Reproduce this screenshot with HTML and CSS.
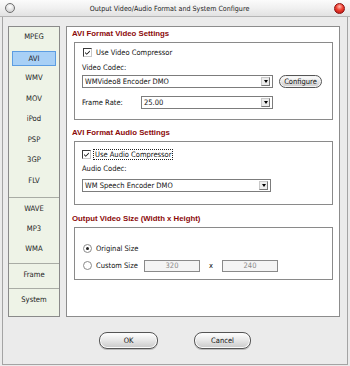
FILE: index.html
```html
<!DOCTYPE html>
<html>
<head>
<meta charset="utf-8">
<link rel="stylesheet" href="styles.css">
</head>
<body>
<div class="win">
  <div class="titlebar">
    <span class="tb-icon"></span>
    <span class="tb-title">Output Video/Audio Format and System Configure</span>
    <span class="tb-close"></span>
  </div>
  <div class="client">
    <div class="content">
      <div class="sidebar">
        <div class="sgroup g1">
          <div class="sitem">MPEG</div>
          <div class="sitem active">AVI</div>
          <div class="sitem">WMV</div>
          <div class="sitem">MOV</div>
          <div class="sitem">iPod</div>
          <div class="sitem">PSP</div>
          <div class="sitem">3GP</div>
          <div class="sitem">FLV</div>
        </div>
        <div class="sgroup g2">
          <div class="sitem">WAVE</div>
          <div class="sitem">MP3</div>
          <div class="sitem">WMA</div>
        </div>
        <div class="sgroup g3">
          <div class="sitem">Frame</div>
        </div>
        <div class="sgroup g4">
          <div class="sitem">System</div>
        </div>
      </div>
      <div class="panel">
        <div class="sec-title">AVI Format Video Settings</div>
        <div class="group g-video">
          <div class="chk-row">
            <span class="chk"><svg width="9" height="9" viewBox="0 0 9 9"><path d="M1.5 4 L3.5 6 L7.5 2 L7.5 3.5 L3.5 7.5 L1.5 5.5 Z" fill="#000"/></svg></span>
            <span class="lbl">Use Video Compressor</span>
          </div>
          <div class="field-lbl">Video Codec:</div>
          <div class="row codec-row">
            <div class="select s-vcodec"><span class="val">WMVideo8 Encoder DMO</span><span class="arrow"><i></i></span></div>
            <div class="pill cfg">Configure</div>
          </div>
          <div class="row fr-row">
            <span class="fr-lbl">Frame Rate:</span>
            <div class="select s-fr"><span class="val">25.00</span><span class="arrow"><i></i></span></div>
          </div>
        </div>
        <div class="sec-title">AVI Format Audio Settings</div>
        <div class="group g-audio">
          <div class="chk-row">
            <span class="chk"><svg width="9" height="9" viewBox="0 0 9 9"><path d="M1.5 4 L3.5 6 L7.5 2 L7.5 3.5 L3.5 7.5 L1.5 5.5 Z" fill="#000"/></svg></span>
            <span class="lbl focus">Use Audio Compressor</span>
          </div>
          <div class="field-lbl">Audio Codec:</div>
          <div class="select s-acodec"><span class="val">WM Speech Encoder DMO</span><span class="arrow"><i></i></span></div>
        </div>
        <div class="sec-title">Output Video Size (Width x Height)</div>
        <div class="group g-size">
          <div class="radio-row">
            <span class="radio on"></span><span class="lbl">Original Size</span>
          </div>
          <div class="radio-row">
            <span class="radio"></span><span class="lbl cs">Custom Size</span>
            <span class="num">320</span>
            <span class="x">x</span>
            <span class="num">240</span>
          </div>
        </div>
      </div>
    </div>
    <div class="buttons">
      <div class="pill btn ok">OK</div>
      <div class="pill btn cancel">Cancel</div>
    </div>
  </div>
</div>
</body>
</html>
```
FILE: styles.css
```css
html, body {
  margin: 0;
  padding: 0;
  background: #ffffff;
}
body {
  font-family: "DejaVu Sans Condensed", "DejaVu Sans", sans-serif;
  font-size: 7.5px;
  color: #111;
}
.win {
  width: 350px;
  height: 366px;
  background: #ebebeb;
  display: flex;
  flex-direction: column;
  box-sizing: border-box;
}
.titlebar {
  height: 17px;
  flex: none;
  box-sizing: border-box;
  background: linear-gradient(#fbfbfb, #f0f0f0 50%, #e2e2e2);
  border-bottom: 1px solid #b5b5b5;
  display: flex;
  align-items: center;
}
.tb-icon {
  width: 10px;
  height: 10px;
  margin-left: 5px;
  box-sizing: border-box;
  border-radius: 50%;
  border: 1px solid #6e6e6e;
  background: radial-gradient(circle at 50% 35%, #ffffff, #d6d6d6 70%);
  flex: none;
}
.tb-title {
  flex: 1;
  text-align: center;
  font-size: 7.1px;
  color: #222;
  margin-top: 1px;
  padding-right: 10px;
}
.tb-close {
  width: 11px;
  height: 11px;
  margin-right: 5px;
  box-sizing: border-box;
  border-radius: 50%;
  border: 1px solid #8a1010;
  background: radial-gradient(circle at 50% 30%, #ffb8b0 0, #f04030 45%, #b01010 100%);
  flex: none;
}
.client {
  flex: 1;
  margin: 0 2px 1px 2px;
  border-left: 1px solid #a4a4a4;
  border-right: 1px solid #a4a4a4;
  border-bottom: 1px solid #a4a4a4;
  padding: 9px 0 0 5px;
  display: flex;
  flex-direction: column;
}
.content {
  display: flex;
  gap: 6px;
  height: 291px;
}
.sidebar {
  width: 52px;
  box-sizing: border-box;
  border: 1px solid #8a8a8a;
  background: #eef3e7;
  display: flex;
  flex-direction: column;
}
.sgroup {
  border-bottom: 1px solid #a9aca5;
  box-sizing: border-box;
}
.sgroup.g1 { height: 171px; padding-top: 3px; }
.sgroup.g2 { height: 66px; padding-top: 4px; }
.sgroup.g3 { height: 25px; padding-top: 4px; }
.sgroup.g4 { border-bottom: none; padding-top: 4px; }
.sitem {
  height: 20.5px;
  line-height: 14px;
  text-align: center;
  font-size: 7.6px;
  color: #222;
  margin: 0 3px;
  box-sizing: border-box;
}
.sgroup.g2 .sitem { height: 20px; }
.sitem.active {
  background: #a8d0f6;
  border: 1px solid #5c9de2;
  height: 15px;
  line-height: 13px;
  margin-bottom: 5.5px;
}
.panel {
  width: 274px;
  box-sizing: border-box;
  border: 1px solid #8c8c8c;
  background: #ffffff;
  padding: 1px 0 0 5px;
}
.sec-title {
  font-family: "Liberation Sans", Arial, sans-serif;
  font-weight: bold;
  font-size: 7.8px;
  color: #8b0a0a;
  height: 12px;
  line-height: 12px;
}
.group {
  margin: 2px 0 0 2px;
  width: 259px;
  box-sizing: border-box;
  border: 1px solid #8a8a8a;
  padding-left: 7px;
}
.g-video { height: 78px; padding-top: 3px; margin-bottom: 7px; }
.g-audio { height: 64px; padding-top: 6px; margin-bottom: 8px; }
.g-size { height: 53px; padding-top: 14px; padding-left: 8px; }
.chk-row {
  display: flex;
  align-items: center;
  height: 12px;
}
.g-video .chk-row { margin-left: 1px; }
.chk {
  width: 9px;
  height: 9px;
  box-sizing: border-box;
  border: 1px solid #3a3a3a;
  border-right-color: #c8c8c8;
  border-bottom-color: #c8c8c8;
  background: #fff;
  display: flex;
  align-items: center;
  justify-content: center;
  flex: none;
}
.chk svg { width: 7px; height: 7px; }
.lbl {
  margin-left: 3px;
  padding: 0 1px;
  line-height: 9px;
}
.lbl.focus {
  outline: 1px dotted #222;
}
.field-lbl {
  height: 12px;
  line-height: 12px;
  margin-top: 4px;
}
.g-audio .field-lbl { margin-top: 3px; }
.row {
  display: flex;
  align-items: center;
}
.codec-row { margin-top: 1px; }
.select {
  height: 13px;
  box-sizing: border-box;
  border: 1px solid #7c7c7c;
  background: #fff;
  display: flex;
  align-items: center;
  justify-content: space-between;
  padding-left: 2px;
}
.select .val { line-height: 11px; }
.select .arrow {
  width: 9px;
  height: 9px;
  margin-right: 2px;
  box-sizing: border-box;
  border: 1px solid #c9c9c9;
  border-right-color: #777;
  border-bottom-color: #777;
  background: #ececec;
  display: flex;
  align-items: center;
  justify-content: center;
}
.select .arrow i {
  width: 0;
  height: 0;
  border-left: 2.5px solid transparent;
  border-right: 2.5px solid transparent;
  border-top: 3px solid #000;
}
.s-vcodec { width: 191px; }
.s-acodec { width: 189px; margin-top: 4px; }
.s-fr { width: 132px; }
.fr-row { margin-top: 8px; }
.fr-lbl { width: 59px; }
.pill {
  box-sizing: border-box;
  border: 1px solid #555;
  border-radius: 8px;
  background: linear-gradient(#ffffff, #e9e9e9 45%, #c9c9c9);
  display: flex;
  align-items: center;
  justify-content: center;
  color: #111;
  box-shadow: inset 0 0 0 1px #f4f4f4;
}
.cfg {
  width: 43px;
  height: 13px;
  margin-left: 6px;
}
.radio-row {
  display: flex;
  align-items: center;
  height: 13px;
  margin-bottom: 4px;
}
.radio {
  width: 9px;
  height: 9px;
  box-sizing: border-box;
  border-radius: 50%;
  border: 1px solid #8a8a8a;
  background: #fff;
  flex: none;
  position: relative;
}
.radio.on::after {
  content: "";
  position: absolute;
  left: 2px;
  top: 2px;
  width: 3px;
  height: 3px;
  border-radius: 50%;
  background: #222;
}
.cs { width: 47px; }
.num {
  width: 56px;
  height: 12px;
  box-sizing: border-box;
  border: 1px solid #8a8a8a;
  background: #f4f4f4;
  color: #8a8a8a;
  text-align: center;
  line-height: 10px;
}
.x { width: 22px; text-align: center; }
.buttons {
  display: flex;
  justify-content: center;
  gap: 36px;
  margin-top: 15px;
  padding-right: 5px;
}
.btn {
  height: 17px;
  box-shadow: inset 0 0 0 1px #fafafa, 0 1px 0 #bbb;
}
.ok { width: 59px; }
.cancel { width: 57px; }
```
